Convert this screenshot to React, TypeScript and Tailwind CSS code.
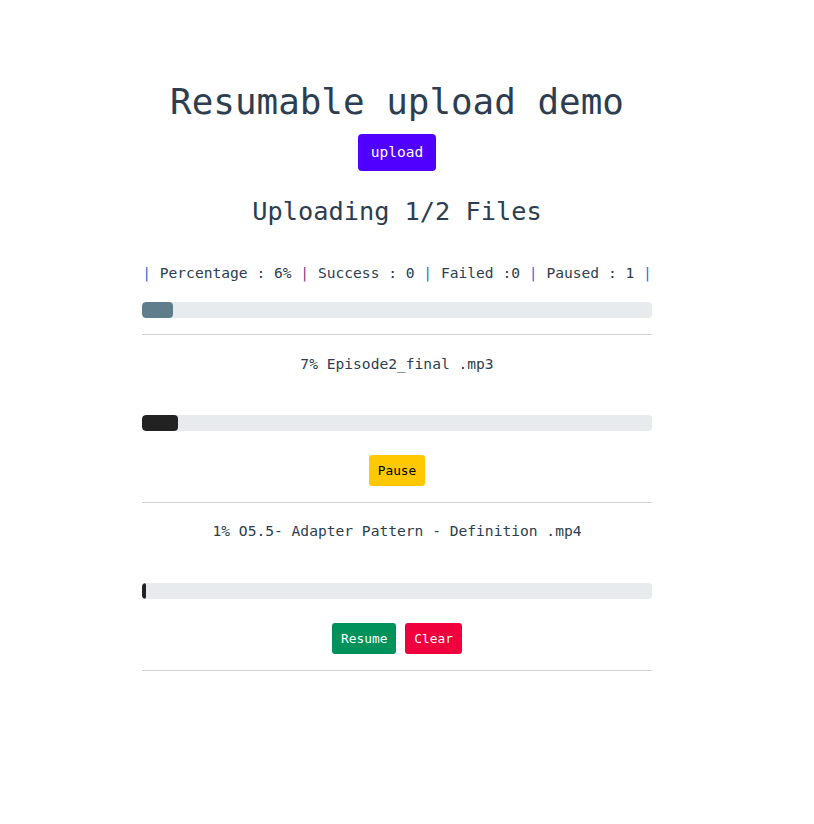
import React from "react";

const mono = { fontFamily: '"DejaVu Sans Mono", "Liberation Mono", monospace' };

function Bar({ pct, color }: { pct: number; color: string }) {
  return (
    <div className="w-full h-[16px] rounded-[4px] bg-[#e8ebee] overflow-hidden">
      <div className={`h-full rounded-[4px] ${color}`} style={{ width: `${pct}%` }} />
    </div>
  );
}

export default function App() {
  return (
    <div className="w-[794px] bg-white min-h-[824px] text-[#2c3e50] flex flex-col items-center" style={mono}>
      <h1 className="mt-[80px] text-[35.9px] leading-[43px]">Resumable upload demo</h1>
      <button className="mt-[11px] h-[37px] px-[13px] rounded-[4px] bg-[#5000ff] text-white text-[14.5px]">upload</button>
      <h2 className="mt-[26px] text-[25.3px] leading-[30px]">Uploading 1/2 Files</h2>
      <div className="w-[510px] flex flex-col items-center">
        <p className="mt-[36px] text-[14.6px] leading-[20px] whitespace-pre">
          <span className="text-[#2a6fe0]">|</span> Percentage : 6% <span className="text-[#7a3d8a]">|</span> Success : 0 <span className="text-[#2a6fe0]">|</span> Failed :0 <span className="text-[#2a6fe0]">|</span> Paused : 1 <span className="text-[#2a6fe0]">|</span>
        </p>
        <div className="mt-[19px] w-full">
          <Bar pct={6} color="bg-[#607d8b]" />
        </div>
        <div className="mt-[16px] w-full h-px bg-[#cfcfd4]" />

        <p className="mt-[19px] text-[14.6px] leading-[20px] whitespace-pre">7% Episode2_final .mp3</p>
        <div className="mt-[41px] w-full">
          <Bar pct={7} color="bg-[#222222]" />
        </div>
        <button className="mt-[24px] h-[31px] px-[9px] rounded-[3px] bg-[#ffc800] text-black text-[12.8px]">Pause</button>
        <div className="mt-[16px] w-full h-px bg-[#cfcfd4]" />

        <p className="mt-[18px] text-[14.6px] leading-[20px] whitespace-pre">1% O5.5- Adapter Pattern - Definition .mp4</p>
        <div className="mt-[42px] w-full">
          <Bar pct={0.8} color="bg-[#222222]" />
        </div>
        <div className="mt-[24px] flex gap-[9px]">
          <button className="h-[31px] px-[9px] rounded-[3px] bg-[#00925a] text-white text-[12.8px]">Resume</button>
          <button className="h-[31px] px-[9px] rounded-[3px] bg-[#f0003c] text-white text-[12.8px]">Clear</button>
        </div>
        <div className="mt-[16px] w-full h-px bg-[#cfcfd4]" />
      </div>
    </div>
  );
}
